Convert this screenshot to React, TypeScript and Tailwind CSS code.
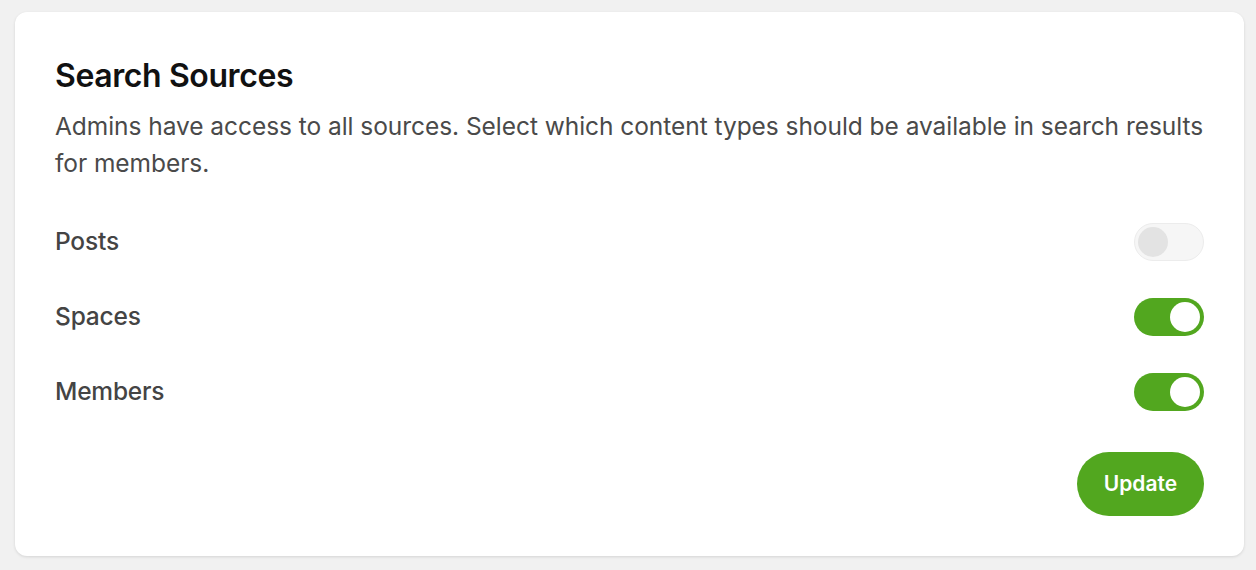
import React, { useState } from 'react';

interface ToggleProps {
  on: boolean;
  onChange: () => void;
}

function Toggle({ on, onChange }: ToggleProps) {
  return (
    <button
      onClick={onChange}
      className={
        on
          ? 'relative flex h-[38px] w-[70px] items-center rounded-full bg-[#52a71f] px-[4px]'
          : 'relative flex h-[38px] w-[70px] items-center rounded-full border border-[#ececec] bg-[#f6f6f6] px-[3px]'
      }
    >
      <span
        className={
          on
            ? 'ml-auto h-[30px] w-[30px] rounded-full bg-white'
            : 'h-[30px] w-[30px] rounded-full bg-[#e3e3e3]'
        }
      />
    </button>
  );
}

export default function App() {
  const [sources, setSources] = useState([
    { id: 'posts', label: 'Posts', on: false },
    { id: 'spaces', label: 'Spaces', on: true },
    { id: 'members', label: 'Members', on: true },
  ]);

  return (
    <div className="min-h-screen bg-[#f1f1f1] pl-[15px] pr-[12px] pt-[12px] font-['Inter',sans-serif]">
      <div className="rounded-[12px] bg-white px-[40px] pb-[40px] pt-[46px] shadow-[0_1px_3px_rgba(0,0,0,0.12)]">
        <h1 className="text-[32px] font-semibold leading-[36px] tracking-[-0.4px] text-[#111]">Search Sources</h1>
        <p className="mt-[14px] text-[24.5px] leading-[37px] tracking-[-0.05px] text-[#4a4a4a]">
          Admins have access to all sources. Select which content types should be available in search results for members.
        </p>

        {/* Source toggles */}
        <div className="mt-[22px] flex flex-col">
          {sources.map((s) => (
            <div key={s.id} className="flex h-[75px] items-center justify-between">
              <span className="text-[24.5px] font-medium tracking-[-0.2px] text-[#444]">{s.label}</span>
              <Toggle
                on={s.on}
                onChange={() =>
                  setSources((prev) => prev.map((p) => (p.id === s.id ? { ...p, on: !p.on } : p)))
                }
              />
            </div>
          ))}
        </div>

        <div className="mt-[23px] flex justify-end">
          <button className="h-[64px] w-[127px] rounded-full bg-[#52a71f] text-[21px] font-semibold text-white">
            Update
          </button>
        </div>
      </div>
    </div>
  );
}
